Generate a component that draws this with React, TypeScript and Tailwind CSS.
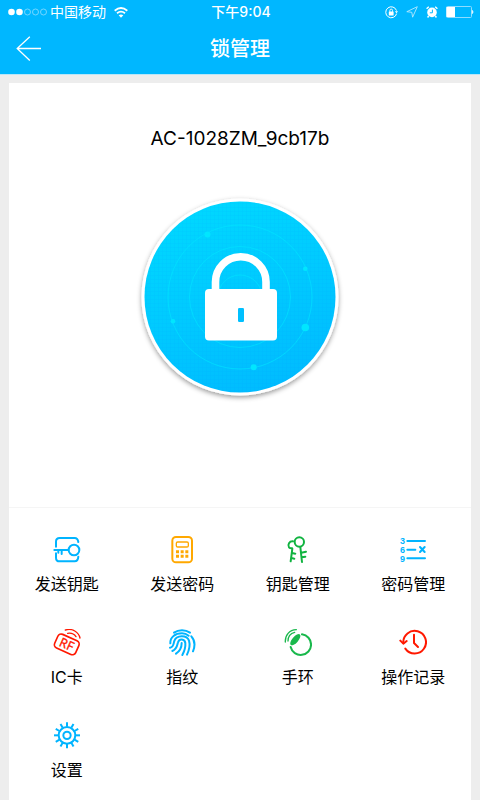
import type { ReactNode } from "react";

type Action = { label: string; color: string; icon: ReactNode };

const SendKeyIcon = (
  <g strokeWidth="6">
    <path d="M9 32V17Q9 6 20 6H65Q74 6 76 18" />
    <path d="M9 52V65Q9 76 20 76H65Q75 76 76 62" />
    <path d="M4 42H46M16 42V50M26 42V54" />
    <circle cx="63" cy="42" r="16" />
  </g>
);

const CalculatorIcon = (
  <g strokeWidth="6">
    <rect x="13" y="3" width="59" height="76" rx="11" />
    <rect x="25" y="18" width="36" height="15" rx="4" strokeWidth="4" />
    <path d="M24 47h9M38 47h9M52 47h9M24 61h9M38 61h9M52 61h9" strokeWidth="9" strokeLinecap="butt" />
  </g>
);

const KeysIcon = (
  <g strokeWidth="6">
    <circle cx="46" cy="18" r="14" />
    <path d="M49 33L54 78M52 50L66 47M53 64L64 62" />
    <path d="M27 16C16 15 10 26 15 34Q17 37 24 37" />
    <path d="M25 38L20 76M24 51L34 53M22 66L31 68" />
  </g>
);

const PasswordListIcon = (
  <g strokeWidth="6">
    <g
      fill="currentColor"
      stroke="none"
      fontSize="27"
      fontWeight="bold"
      className="font-['Liberation_Sans',sans-serif]"
    >
      <text x="3" y="24">3</text>
      <text x="3" y="51">6</text>
      <text x="3" y="78">9</text>
    </g>
    <path d="M25 15H78M25 41H49M25 67H78M63 33L77 48M77 33L63 48" />
  </g>
);

const CardIcon = (
  <g strokeWidth="5">
    <g transform="rotate(24 42 46)">
      <rect x="7" y="24" width="69" height="45" rx="11" />
      <text
        x="41"
        y="60"
        textAnchor="middle"
        fontSize="38"
        fill="currentColor"
        strokeWidth="1"
        className="font-['Noto_Sans',sans-serif]"
      >
        RF
      </text>
    </g>
    <path d="M37 3C58 -3 77 9 81 27" strokeWidth="4" />
    <path d="M44 13C56 11 64 16 69 23" strokeWidth="4" />
  </g>
);

const FingerprintIcon = (
  <g strokeWidth="6">
    <path d="M18 11C32 1 52 1 66 11" />
    <path d="M7 43C6 24 22 13 42 13Q53 13 62 20" />
    <path d="M70 22C81 34 81 52 75 67" />
    <path d="M6 56C18 54 16 43 19 36C25 17 57 17 63 35C67 48 64 62 57 77" />
    <path d="M13 66C28 60 27 48 30 40C34 28 50 29 52 42C53 55 49 67 43 78" />
    <path d="M24 74C36 66 41 55 41 42" />
  </g>
);

const BandIcon = (
  <g strokeWidth="6">
    <path d="M54 16A31 31 0 1 1 20 54" />
    <ellipse cx="34" cy="32" rx="21" ry="9" transform="rotate(-49 34 32)" fill="currentColor" stroke="none" />
    <path d="M4 39C3 18 16 3 37 2" strokeWidth="4" />
    <path d="M12 36C12 23 20 13 32 10" strokeWidth="4" />
  </g>
);

const HistoryIcon = (
  <g strokeWidth="6">
    <path d="M13 42A34 34 0 1 1 19 59" />
    <path d="M4 35L13 44L23 36" />
    <path d="M45 17V42L57 54" />
  </g>
);

const GearIcon = (
  <g strokeWidth="6">
    <circle cx="42" cy="40" r="25" />
    <circle cx="42" cy="40" r="11" />
    {Array.from({ length: 12 }, (_, i) => (
      <path key={i} d="M42 14V1" strokeLinecap="butt" transform={`rotate(${i * 30} 42 40)`} />
    ))}
  </g>
);

const actions: Action[] = [
  { label: "发送钥匙", color: "text-[#00b4ff]", icon: SendKeyIcon },
  { label: "发送密码", color: "text-[#ffa800]", icon: CalculatorIcon },
  { label: "钥匙管理", color: "text-[#10b340]", icon: KeysIcon },
  { label: "密码管理", color: "text-[#00b4ff]", icon: PasswordListIcon },
  { label: "IC卡", color: "text-[#ff1800]", icon: CardIcon },
  { label: "指纹", color: "text-[#00b4ff]", icon: FingerprintIcon },
  { label: "手环", color: "text-[#19b84c]", icon: BandIcon },
  { label: "操作记录", color: "text-[#ff1800]", icon: HistoryIcon },
  { label: "设置", color: "text-[#00b4ff]", icon: GearIcon },
];

function StatusBar() {
  return (
    <div className="grid h-6 grid-cols-[1fr_auto_1fr] items-center pl-2 pr-1.5 text-sm leading-6">
      <div className="flex items-center">
        <svg width="40" height="8" viewBox="0 0 40 8" aria-hidden="true">
          <circle cx="3.5" cy="4" r="3.3" fill="#fff" />
          <circle cx="11.5" cy="4" r="3.3" fill="#fff" />
          {[19.5, 27.5, 35.5].map((x) => (
            <circle key={x} cx={x} cy="4" r="3" fill="none" stroke="#8fdcff" strokeWidth="0.8" />
          ))}
        </svg>
        <span className="ml-0.5">中国移动</span>
        <svg className="ml-2" width="14" height="11" viewBox="0 0 14 11" fill="none" stroke="#fff" strokeWidth="1.8" aria-hidden="true">
          <path d="M0.7 3.7Q7 -1.6 13.3 3.7" />
          <path d="M3 6.3Q7 3 11 6.3" />
          <path d="M7 10.8L4.7 8.3Q7 6.8 9.3 8.3Z" fill="#fff" stroke="none" />
        </svg>
      </div>
      <span className="font-medium">下午9:04</span>
      <div className="flex items-center justify-end gap-2">
        <svg width="13" height="13" viewBox="0 0 13 13" fill="none" stroke="#fff" aria-hidden="true">
          <path d="M11.6 7.6A5.5 5.5 0 1 1 11.5 4.6" strokeWidth="1" />
          <path d="M9.9 5.2H13.1L11.5 7.3Z" fill="#fff" stroke="none" />
          <rect x="3.8" y="5.6" width="4.8" height="3.8" rx="0.5" fill="#fff" stroke="none" />
          <path d="M4.9 5.8V4.4A1.3 1.3 0 0 1 7.5 4.4V5.8" strokeWidth="0.9" />
        </svg>
        <svg width="12" height="12" viewBox="0 0 12 12" fill="none" stroke="#b5e9ff" strokeWidth="0.9" aria-hidden="true">
          <path d="M11.3 0.7L0.8 5.7L5.8 6.3L6.6 11.2Z" />
        </svg>
        <svg width="12" height="12" viewBox="0 0 12 12" fill="none" aria-hidden="true">
          <circle cx="6" cy="6.4" r="4.8" fill="#fff" />
          <path d="M0.6 2.8L2.8 0.8M11.4 2.8L9.2 0.8M2.6 10L1.6 11.5M9.4 10L10.4 11.5" stroke="#fff" strokeWidth="1.4" />
          <path d="M6.4 3.6V6.8H3.8" stroke="#00b7ff" strokeWidth="1" />
        </svg>
        <svg width="28" height="12" viewBox="0 0 28 12" aria-hidden="true">
          <rect x="0.5" y="0.5" width="25" height="11" rx="1" fill="none" stroke="#8fdcff" />
          <rect x="0.5" y="1" width="8.5" height="10" fill="#fff" />
          <path d="M26.3 4.3Q28 6 26.3 7.7Z" fill="#fff" stroke="#fff" strokeWidth="0.6" />
        </svg>
      </div>
    </div>
  );
}

function LockDial() {
  return (
    <svg width="220" height="220" viewBox="0 0 220 220" aria-hidden="true">
      <defs>
        <linearGradient id="dial" x1="0.3" y1="0" x2="0.7" y2="1">
          <stop offset="0" stopColor="#00d8ff" />
          <stop offset="1" stopColor="#00bbff" />
        </linearGradient>
        <pattern id="mesh" width="4" height="4" patternUnits="userSpaceOnUse">
          <path d="M0 0.5H4M0.5 0V4" stroke="#008cff" strokeOpacity="0.05" />
        </pattern>
        <filter id="shade" x="-10%" y="-10%" width="120%" height="120%">
          <feDropShadow dx="0" dy="2" stdDeviation="2.5" floodColor="#000" floodOpacity="0.4" />
        </filter>
      </defs>
      <circle cx="110" cy="110" r="98.5" fill="#fff" filter="url(#shade)" />
      <circle cx="110" cy="110" r="95.5" fill="url(#dial)" />
      <circle cx="110" cy="110" r="95.5" fill="url(#mesh)" />
      <g fill="none" stroke="#00e4ff" strokeOpacity="0.65">
        <circle cx="110" cy="110" r="72" />
        <circle cx="110" cy="110" r="50.5" />
        <circle cx="110" cy="110" r="22" />
      </g>
      <g fill="#00e6ff">
        <circle cx="77.5" cy="47.5" r="3" />
        <circle cx="175.3" cy="81.7" r="2.3" />
        <circle cx="175.3" cy="140.5" r="3.8" />
        <circle cx="123.7" cy="180.3" r="3" />
        <circle cx="43" cy="134.3" r="2.3" />
      </g>
      <path d="M85.5 104V95A25.2 25.2 0 0 1 136 95V104" fill="none" stroke="#fff" strokeWidth="7.6" />
      <rect x="75" y="102" width="72" height="51.5" rx="4" fill="#fff" />
      <rect x="108" y="121" width="6" height="14" rx="1.2" fill="#00c0ff" />
    </svg>
  );
}

export default function App() {
  return (
    <div className="flex min-h-screen flex-col bg-[#ededed] font-[Inter,'Noto_Sans_CJK_SC',sans-serif] text-black">
      <header className="border-b border-[#b9e6f8] bg-[#00b7ff] text-white">
        <StatusBar />
        <div className="grid h-[50px] grid-cols-[1fr_auto_1fr] items-center px-4">
          <button type="button" aria-label="返回" className="justify-self-start">
            <svg width="26" height="26" viewBox="0 0 26 26" fill="none" stroke="#fff" strokeWidth="1.3" aria-hidden="true">
              <path d="M25 12.5H1.2M13.8 0.8L1.2 12.5L13.8 24.5" />
            </svg>
          </button>
          <h1 className="text-xl font-medium">锁管理</h1>
        </div>
      </header>
      <main className="mx-[9px] mt-2 flex flex-1 flex-col bg-white">
        <section className="flex flex-col items-center border-b border-[#f5f5f5] pt-10 pb-[100px]">
          <h2 className="mb-8 text-[19px] leading-8">AC-1028ZM_9cb17b</h2>
          <LockDial />
        </section>
        <nav className="grid grid-cols-4 pt-2">
          {actions.map((a) => (
            <button key={a.label} type="button" className="flex flex-col items-center gap-2 pt-5 pb-[13px]">
              <svg
                className={a.color}
                width="28"
                height="28"
                viewBox="0 0 84 84"
                fill="none"
                stroke="currentColor"
                strokeLinecap="round"
                strokeLinejoin="round"
                aria-hidden="true"
              >
                {a.icon}
              </svg>
              <span className="text-base leading-6">{a.label}</span>
            </button>
          ))}
        </nav>
      </main>
    </div>
  );
}
